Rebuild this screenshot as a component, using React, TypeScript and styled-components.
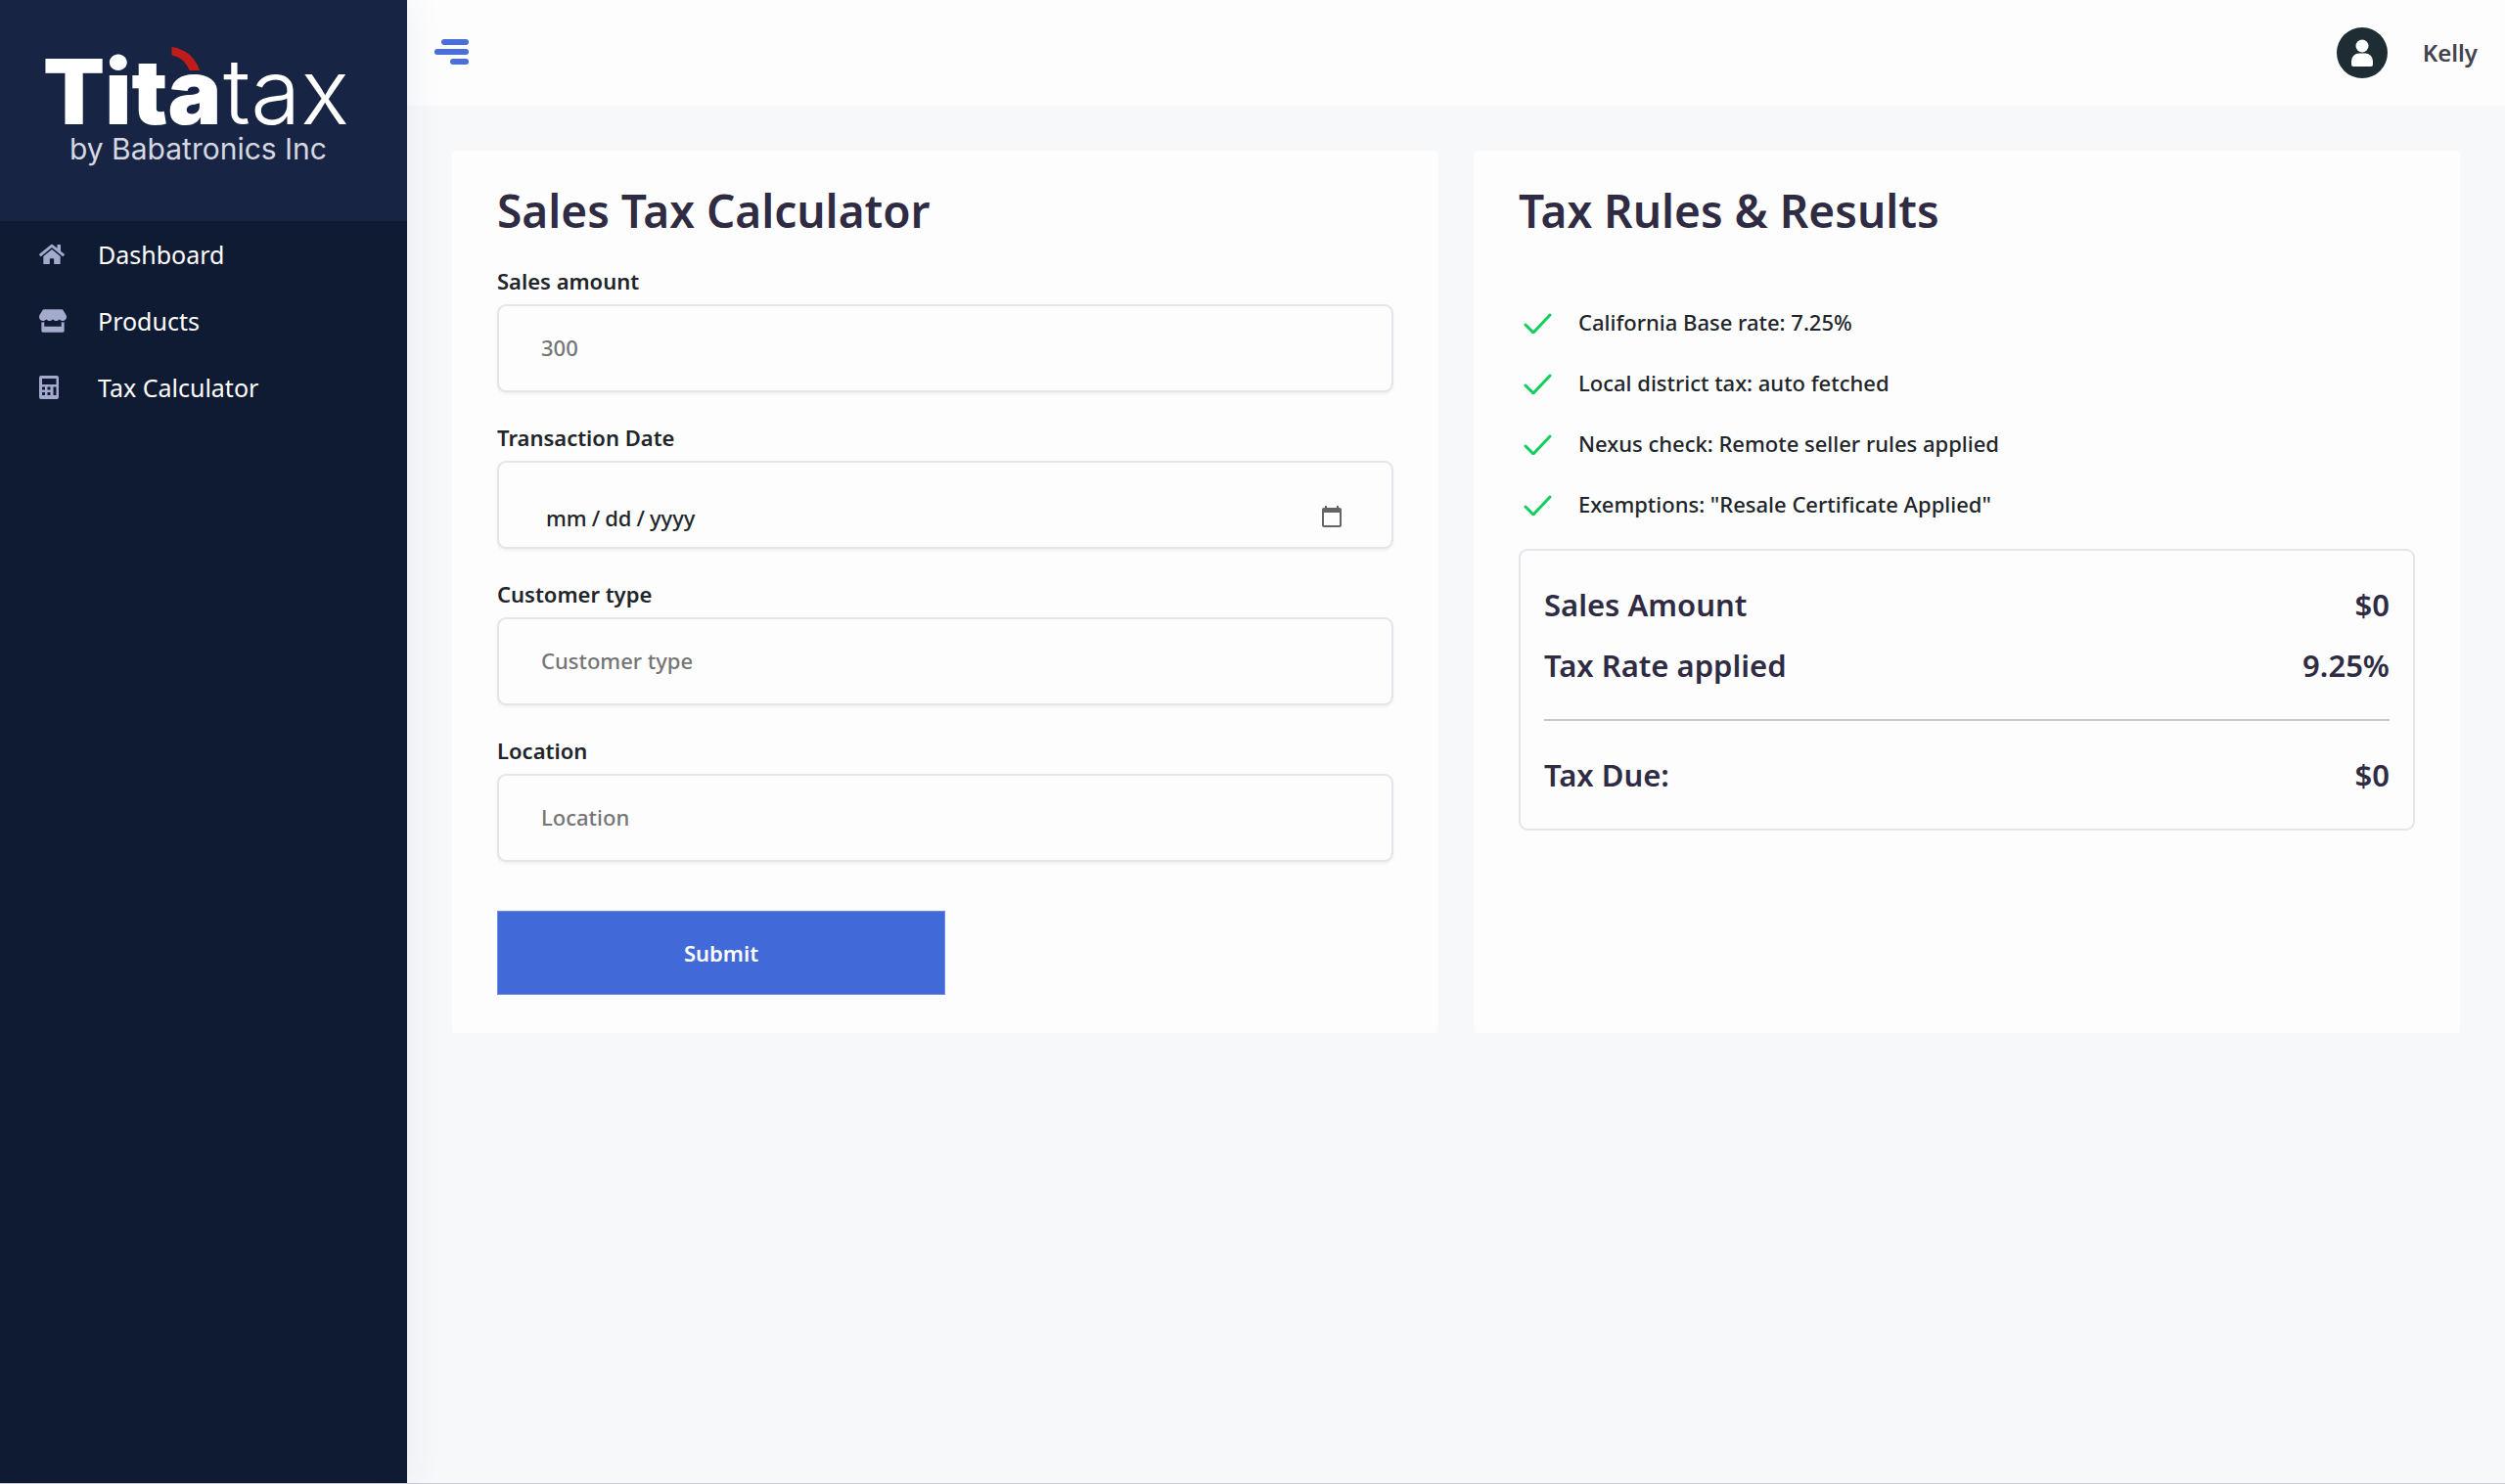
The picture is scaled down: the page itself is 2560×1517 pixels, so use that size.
import React from "react";
import styled, { createGlobalStyle } from "styled-components";
import { FaHome, FaStore } from "react-icons/fa";

const Global = createGlobalStyle`
  *, *::before, *::after { box-sizing: border-box; }
  body {
    margin: 0;
    background: #f7f8fa;
    color: #212529;
    font: 500 22px/32px "Noto Sans", "Open Sans", sans-serif;
  }
  h1, h2, p, ul, dl, dd { margin: 0; padding: 0; }
`;

const Shell = styled.div`
  display: flex;
  min-height: 100vh;
  border-bottom: 1px solid #c9ccd3;
`;

const Sidebar = styled.aside`
  flex: 0 0 416px;
  background: #0f1a33;
  box-shadow: 0 0 36px rgba(40, 60, 110, 0.08);
  z-index: 1;
`;

const Brand = styled.a`
  display: flex;
  height: 226px;
  padding: 30px 40px 0;
  background: #182443;
`;

const NavItem = styled.a`
  display: flex;
  align-items: center;
  height: 68px;
  padding-left: 40px;
  color: #ffffff;
  font-size: 25px;
  font-weight: 400;
  text-decoration: none;

  svg { color: #a3aacb; }
`;

const NavIcon = styled.span`
  display: flex;
  width: 60px;
`;

const Page = styled.div`
  flex: 1;
  min-width: 0;
`;

const Topbar = styled.header`
  display: flex;
  align-items: center;
  justify-content: space-between;
  height: 108px;
  padding: 0 28px;
  background: #fdfdfe;
`;

const MenuButton = styled.button`
  display: flex;
  padding: 0;
  border: 0;
  background: none;
`;

const User = styled.div`
  display: flex;
  align-items: center;
  gap: 36px;
  color: #45424f;
  font-size: 24px;
  font-weight: 600;
`;

const Columns = styled.main`
  display: grid;
  grid-template-columns: 1fr 1fr;
  gap: 36px;
  padding: 46px;
`;

const Card = styled.section`
  padding: 31px 46px 39px;
  border-radius: 4px;
  background: #fdfdfe;
`;

const Title = styled.h1`
  color: #2f2b43;
  font-size: 46px;
  font-weight: 600;
  line-height: 60px;
`;

const Form = styled.form`
  padding-top: 26px;
`;

const Field = styled.div`
  margin-bottom: 30px;
`;

const Label = styled.label`
  display: block;
  height: 40px;
  font-weight: 600;
`;

const Input = styled.input`
  display: block;
  width: 100%;
  height: 90px;
  padding: 0 43px 2px;
  border: 2px solid #e3e5e9;
  border-radius: 9px;
  outline: 0;
  background: #fdfdfe;
  box-shadow: 0 2px 3px rgba(0, 0, 0, 0.05);
  color: #212529;
  font: inherit;

  &::placeholder { color: #757575; opacity: 1; }
`;

const DateInput = styled(Input)`
  padding: 26px 46px 0 47px;

  &::-webkit-datetime-edit-text { padding: 0 4px; }
  &::-webkit-calendar-picker-indicator {
    width: 26px;
    height: 26px;
    opacity: 0.6;
  }
`;

const Submit = styled.button`
  display: block;
  width: 50%;
  height: 86px;
  margin-top: 50px;
  border: 1px solid #6d8de0;
  background: #4169d8;
  color: #ffffff;
  font: inherit;
  font-weight: 600;
`;

const Rules = styled.ul`
  padding-top: 53px;
  list-style: none;
`;

const Rule = styled.li`
  display: flex;
  align-items: center;
  gap: 26px;
  height: 62px;
  padding-left: 4px;
`;

const Summary = styled.dl`
  margin-top: 15px;
  padding: 24px;
  border: 2px solid #e3e5e9;
  border-radius: 9px;
`;

const SummaryRow = styled.div`
  display: flex;
  align-items: center;
  justify-content: space-between;
  height: 62px;
  color: #2f2b43;
  font-size: 31px;
  font-weight: 600;

  dd { text-align: right; }
`;

const Divider = styled.hr`
  height: 2px;
  margin: 24px 0;
  border: 0;
  background: #c8c9cd;
`;

const Logo = () => (
  <svg width="336" height="160" viewBox="0 0 336 160" role="img" aria-label="Titatax by Babatronics Inc">
    <g fontFamily="Inter, sans-serif" fill="#ffffff">
      <text x="4" y="97" fontSize="92" fontWeight="900">Tita</text>
      <text x="188" y="97" fontSize="93" fontWeight="300">tax</text>
      <text x="31" y="133" fontSize="30" fontWeight="400" fill="#d5d8e1">by Babatronics Inc</text>
    </g>
    <path d="M135.500 18c15 2 25 12 28.500 24h-10.500c-3-8-9-14-18-15.500z" fill="#c11c1c" />
  </svg>
);

const CalculatorIcon = () => (
  <svg width="20" height="24" viewBox="0 0 20 24" fill="currentColor" fillRule="evenodd">
    <path d="M2 0h16a2 2 0 0 1 2 2v20a2 2 0 0 1-2 2H2a2 2 0 0 1-2-2V2a2 2 0 0 1 2-2zM3 3v6h14.500V3zM3 11.500v3h3v-3zM8.500 11.500v3h3v-3zM3 17v3h3v-3zM8.500 17v3h3v-3zM14.500 11.500V20h3v-8.500z" />
  </svg>
);

const MenuIcon = () => (
  <svg width="36" height="28" viewBox="0 0 36 28" fill="#4a6fd6">
    <rect x="7" y="0" width="28" height="6" rx="3" />
    <rect x="0" y="10" width="35" height="6" rx="3" />
    <rect x="16" y="20" width="19" height="6" rx="3" />
  </svg>
);

const Avatar = () => (
  <svg width="52" height="52" viewBox="0 0 52 52">
    <circle cx="26" cy="26" r="26" fill="#1e2d33" />
    <circle cx="26" cy="19" r="6.5" fill="#fff" />
    <path d="M15 38v-3.500a8 8 0 0 1 8-8h6a8 8 0 0 1 8 8V38a2 2 0 0 1-2 2H17a2 2 0 0 1-2-2z" fill="#fff" />
  </svg>
);

const Check = () => (
  <svg width="31" height="24" viewBox="0 0 31 24" fill="none" stroke="#0fcf5c" strokeWidth="3" strokeLinecap="round" strokeLinejoin="round">
    <path d="M3 15l8 8L28 5" />
  </svg>
);

const nav = [
  { label: "Dashboard", icon: <FaHome size={26} /> },
  { label: "Products", icon: <FaStore size={28} /> },
  { label: "Tax Calculator", icon: <CalculatorIcon /> },
];

const rules = [
  "California Base rate: 7.25%",
  "Local district tax: auto fetched",
  "Nexus check: Remote seller rules applied",
  'Exemptions: "Resale Certificate Applied"',
];

export default function App() {
  return (
    <>
      <Global />
      <Shell>
        <Sidebar>
          <Brand href="#"><Logo /></Brand>
          <nav>
            {nav.map((item) => (
              <NavItem href="#" key={item.label}>
                <NavIcon>{item.icon}</NavIcon>
                {item.label}
              </NavItem>
            ))}
          </nav>
        </Sidebar>
        <Page>
          <Topbar>
            <MenuButton type="button" aria-label="Toggle menu"><MenuIcon /></MenuButton>
            <User><Avatar />Kelly</User>
          </Topbar>
          <Columns>
            <Card>
              <Title>Sales Tax Calculator</Title>
              <Form onSubmit={(e) => e.preventDefault()}>
                <Field>
                  <Label htmlFor="amount">Sales amount</Label>
                  <Input id="amount" placeholder="300" />
                </Field>
                <Field>
                  <Label htmlFor="date">Transaction Date</Label>
                  <DateInput id="date" type="date" />
                </Field>
                <Field>
                  <Label htmlFor="customer">Customer type</Label>
                  <Input id="customer" placeholder="Customer type" />
                </Field>
                <Field>
                  <Label htmlFor="location">Location</Label>
                  <Input id="location" placeholder="Location" />
                </Field>
                <Submit type="submit">Submit</Submit>
              </Form>
            </Card>
            <Card>
              <Title as="h2">Tax Rules &amp; Results</Title>
              <Rules>
                {rules.map((rule) => (
                  <Rule key={rule}><Check />{rule}</Rule>
                ))}
              </Rules>
              <Summary>
                <SummaryRow><dt>Sales Amount</dt><dd>$0</dd></SummaryRow>
                <SummaryRow><dt>Tax Rate applied</dt><dd>9.25%</dd></SummaryRow>
                <Divider />
                <SummaryRow><dt>Tax Due:</dt><dd>$0</dd></SummaryRow>
              </Summary>
            </Card>
          </Columns>
        </Page>
      </Shell>
    </>
  );
}
